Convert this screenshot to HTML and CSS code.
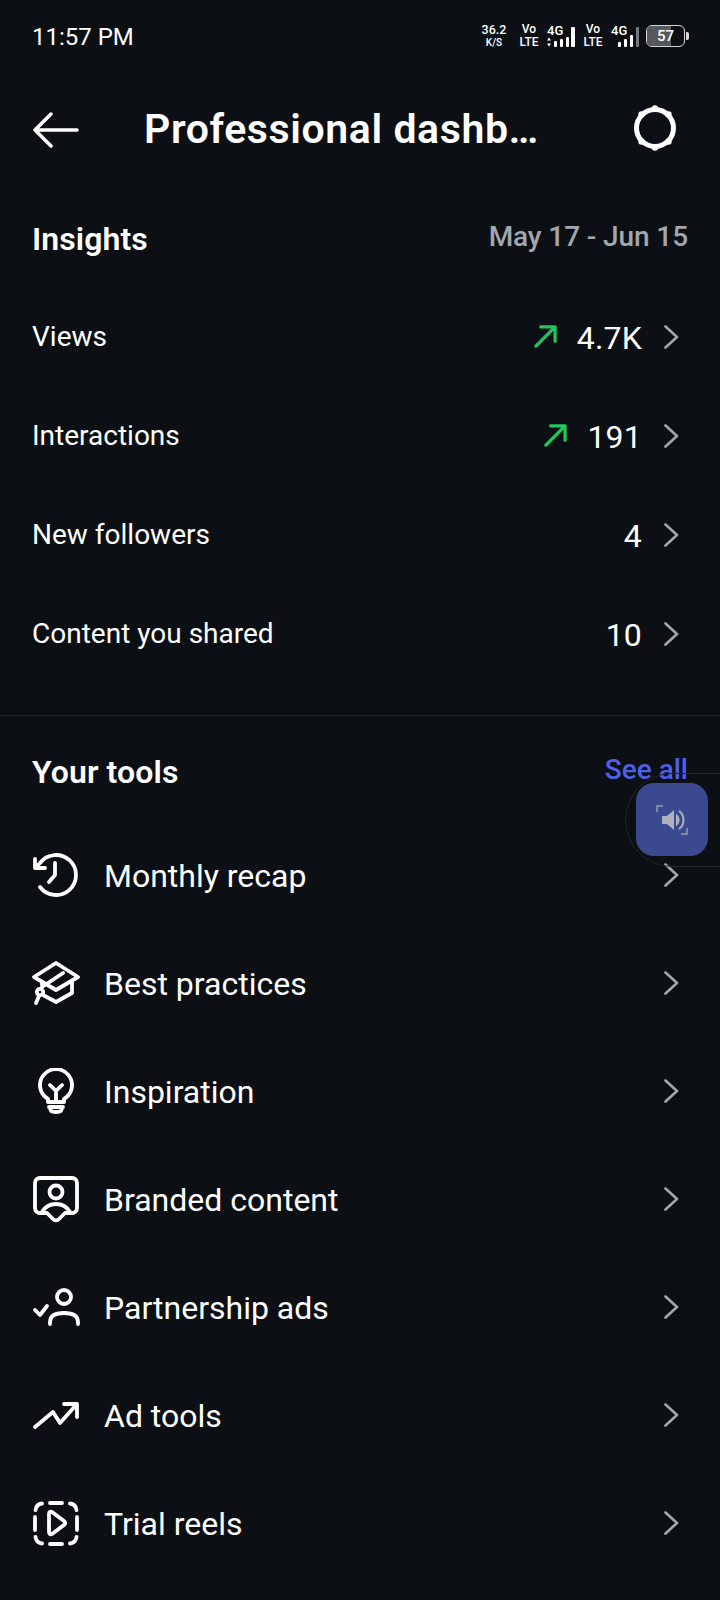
FILE: index.html
```html
<!DOCTYPE html>
<html lang="en">
<head>
<meta charset="utf-8">
<title>Professional dashboard</title>
<link rel="stylesheet" href="styles.css">
</head>
<body>
<div class="screen">
  <div class="status">
    <span class="time">11:57 PM</span>
    <div class="sys">
      <div class="stack speed"><span>36.2</span><span class="small">K/S</span></div>
      <div class="stack volte"><span>Vo</span><span>LTE</span></div>
      <div class="net">
        <span class="g4">4G</span>
        <svg width="28" height="20" viewBox="0 0 28 20"><path d="M2 10.500l2 3H0zM2 19.500l-2-3h4z" fill="#fff"/><rect x="7" y="14" width="3" height="6" rx="1" fill="#fff"/><rect x="13" y="12" width="3" height="8" rx="1" fill="#fff"/><rect x="19" y="10" width="3" height="10" rx="1" fill="#fff"/><rect x="24" y="0" width="4" height="20" rx="1" fill="#fff"/></svg>
      </div>
      <div class="stack volte second"><span>Vo</span><span>LTE</span></div>
      <div class="net">
        <span class="g4">4G</span>
        <svg width="28" height="20" viewBox="0 0 28 20"><rect x="7" y="15" width="3" height="5" rx="1" fill="#fff"/><rect x="13" y="12" width="3" height="8" rx="1" fill="#fff"/><rect x="19" y="8" width="3" height="12" rx="1" fill="#fff"/><rect x="25" y="0" width="3" height="20" rx="1" fill="#77797c"/></svg>
      </div>
      <div class="battery"><div class="level"></div><span class="pct">57</span></div>
      <div class="nub"></div>
    </div>
  </div>

  <header class="topbar">
    <svg class="back" width="48" height="36" viewBox="0 0 48 36"><path d="M45 18H3M19 2L3 18l16 16" fill="none" stroke="#fff" stroke-width="3.500" stroke-linecap="round" stroke-linejoin="round"/></svg>
    <h1 class="title">Professional dashb…</h1>
    <svg class="gear" width="48" height="48" viewBox="0 0 48 48"><circle cx="24" cy="24" r="18.500" fill="none" stroke="#fff" stroke-width="5"/><g fill="#fff"><circle cx="24" cy="4.500" r="3.200"/><circle cx="24" cy="43.500" r="3.200"/><circle cx="37.500" cy="10.500" r="3.200"/><circle cx="10.500" cy="10.500" r="3.200"/><circle cx="37.500" cy="37.500" r="3.200"/><circle cx="10.500" cy="37.500" r="3.200"/></g></svg>
  </header>

  <section class="insights">
    <div class="head">
      <h2 class="heading">Insights</h2>
      <span class="date">May 17 - Jun 15</span>
    </div>
    <div class="stat">
      <span class="stat-label">Views</span>
      <svg class="up" width="23" height="23" viewBox="0 0 24 24"><path d="M2 22L22 2M7 2h15v15" fill="none" stroke="#22c55e" stroke-width="3.400" stroke-linecap="round" stroke-linejoin="round"/></svg>
      <span class="value">4.7K</span>
      <svg class="chev" width="16" height="24" viewBox="0 0 16 24"><path d="M1.500 1.500L13 12 1.500 22.500" /></svg>
    </div>
    <div class="stat">
      <span class="stat-label">Interactions</span>
      <svg class="up" width="23" height="23" viewBox="0 0 24 24"><path d="M2 22L22 2M7 2h15v15" fill="none" stroke="#22c55e" stroke-width="3.400" stroke-linecap="round" stroke-linejoin="round"/></svg>
      <span class="value">191</span>
      <svg class="chev" width="16" height="24" viewBox="0 0 16 24"><path d="M1.500 1.500L13 12 1.500 22.500" /></svg>
    </div>
    <div class="stat">
      <span class="stat-label">New followers</span>
      <span class="value">4</span>
      <svg class="chev" width="16" height="24" viewBox="0 0 16 24"><path d="M1.500 1.500L13 12 1.500 22.500" /></svg>
    </div>
    <div class="stat">
      <span class="stat-label">Content you shared</span>
      <span class="value">10</span>
      <svg class="chev" width="16" height="24" viewBox="0 0 16 24"><path d="M1.500 1.500L13 12 1.500 22.500" /></svg>
    </div>
  </section>

  <section class="tools">
    <div class="head tools-head">
      <h2 class="heading">Your tools</h2>
      <span class="see">See all</span>
    </div>
    <div class="tool">
      <svg class="ico" width="48" height="48" viewBox="0 0 48 48"><path d="M3 7v9h10M3 16l5-5A20 20 0 1 1 8 35M23 11v12l-6 7"/></svg>
      <span class="tool-label">Monthly recap</span>
      <svg class="chev" width="16" height="24" viewBox="0 0 16 24"><path d="M1.500 1.500L13 12 1.500 22.500" /></svg>
    </div>
    <div class="tool">
      <svg class="ico" width="48" height="48" viewBox="0 0 48 48"><path d="M24 3L2 17l22 13 22-13zM40 21v12l-16 9-13-7M10 22v3M31 13L10 27"/><circle cx="8" cy="32" r="3.200"/><path d="M7 36l-3 7"/></svg>
      <span class="tool-label">Best practices</span>
      <svg class="chev" width="16" height="24" viewBox="0 0 16 24"><path d="M1.500 1.500L13 12 1.500 22.500" /></svg>
    </div>
    <div class="tool">
      <svg class="ico" width="48" height="48" viewBox="0 0 48 48"><path d="M16 31a16 16 0 1 1 16 0v3H16zM18 17l6 6 6-6M24 23v11M17 39h14M18 39c0 4 1 5 6 5s6-1 6-5"/></svg>
      <span class="tool-label">Inspiration</span>
      <svg class="chev" width="16" height="24" viewBox="0 0 16 24"><path d="M1.500 1.500L13 12 1.500 22.500" /></svg>
    </div>
    <div class="tool">
      <svg class="ico" width="48" height="48" viewBox="0 0 48 48"><path d="M15 37H8a5 5 0 0 1-5-5V7a5 5 0 0 1 5-5h32a5 5 0 0 1 5 5v25a5 5 0 0 1-5 5h-7l-6 6a4 4 0 0 1-6 0zM10 36c3-5 8-8 14-8s11 3 14 8"/><circle cx="24" cy="16" r="6.500"/></svg>
      <span class="tool-label">Branded content</span>
      <svg class="chev" width="16" height="24" viewBox="0 0 16 24"><path d="M1.500 1.500L13 12 1.500 22.500" /></svg>
    </div>
    <div class="tool">
      <svg class="ico" width="48" height="48" viewBox="0 0 48 48"><circle cx="32" cy="13" r="7"/><path d="M18 40v-2c0-6 5-9 14-9s14 3 14 9v2M3 26l5 5 7-9"/></svg>
      <span class="tool-label">Partnership ads</span>
      <svg class="chev" width="16" height="24" viewBox="0 0 16 24"><path d="M1.500 1.500L13 12 1.500 22.500" /></svg>
    </div>
    <div class="tool">
      <svg class="ico" width="48" height="48" viewBox="0 0 48 48"><path d="M3 35l18-15 7 11 17-19M32 12h13v13"/></svg>
      <span class="tool-label">Ad tools</span>
      <svg class="chev" width="16" height="24" viewBox="0 0 16 24"><path d="M1.500 1.500L13 12 1.500 22.500" /></svg>
    </div>
    <div class="tool">
      <svg class="ico" width="48" height="48" viewBox="0 0 48 48"><path d="M18 3h12M18 44h12M3 17v13M45 17v13M3.500 10C4 6 6 4 10 3.500M38 3.500C42 4 44 6 44.500 10M3.500 37C4 41 6 43 10 43.500M38 43.500C42 43 44 41 44.500 37M17 14c0-2 1.500-3 3-2l12 9c1.500 1 1.500 3 0 4l-12 9c-1.500 1-3 0-3-2z"/></svg>
      <span class="tool-label">Trial reels</span>
      <svg class="chev" width="16" height="24" viewBox="0 0 16 24"><path d="M1.500 1.500L13 12 1.500 22.500" /></svg>
    </div>
  </section>

  <div class="float-pill"></div>
  <div class="float-btn">
    <svg width="32" height="30" viewBox="0 0 32 30"><path d="M1 7V1h6M31 23v6h-6" fill="none" stroke="#7f86a3" stroke-width="2"/><path d="M6 11h5l7-6v20l-7-6H6z" fill="#aeb2bd"/><path d="M20 9c2.500 1.500 3.500 3.500 3.500 6s-1 4.500-3.500 6z" fill="#aeb2bd"/><path d="M23 6c3 2 4.500 5 4.500 9s-1.500 7-4.500 9" fill="none" stroke="#aeb2bd" stroke-width="2"/></svg>
  </div>
</div>
</body>
</html>
```

FILE: styles.css
```css
* { box-sizing: border-box; }
html, body { margin: 0; padding: 0; }
body { background: #0c1014; color: #fff; font-family: Roboto, "Noto Sans", sans-serif; }
.screen { position: relative; width: 720px; height: 1600px; overflow: hidden; background: #0c1014; }

.status { height: 72px; padding: 0 32px; display: flex; align-items: center; justify-content: space-between; }
.time { font-size: 24px; margin-top: 2px; }
.sys { display: flex; align-items: center; margin-right: -1px; }
.stack { display: flex; flex-direction: column; align-items: center; font-size: 12px; font-weight: 500; line-height: 13px; }
.stack .small { font-size: 10px; }
.speed { width: 26px; margin-right: 12px; font-size: 12.500px; }
.volte { width: 20px; margin-right: 8px; }
.volte.second { margin-left: 8px; }
.net { position: relative; display: flex; align-items: flex-end; width: 28px; height: 22px; }
.g4 { position: absolute; left: 0; top: -1px; font-size: 13px; font-weight: 500; line-height: 13px; }
.battery { position: relative; width: 39px; height: 22px; margin-left: 7px; border: 1.500px solid #d5d6d8; border-radius: 6px; overflow: hidden; display: flex; align-items: center; justify-content: center; }
.level { position: absolute; left: 0; top: 0; bottom: 0; width: 65%; background: #55585c; }
.pct { position: relative; font-size: 15px; font-weight: 500; }
.nub { width: 3px; height: 8px; margin-left: 1px; background: #d5d6d8; border-radius: 0 2px 2px 0; }

.topbar { height: 112px; padding: 0 41px 0 32px; display: flex; align-items: center; }
.back { flex: none; margin-top: 4px; }
.title { flex: 1; margin: 2px 0 0 64px; font-size: 41px; font-weight: 600; line-height: 48px; white-space: nowrap; letter-spacing: 0.6px; }
.gear { flex: none; }

.insights { height: 532px; border-bottom: 1px solid #1e2227; }
.head { display: flex; align-items: center; justify-content: space-between; padding: 0 32px; height: 103px; }
.heading { margin: 6px 0 0; font-size: 32px; font-weight: 600; letter-spacing: 0.1px; }
.date { font-size: 28px; font-weight: 500; color: #a3a6ae; margin-top: 2px; letter-spacing: -0.1px; }

.stat { height: 99px; padding: 0 40px 0 32px; display: flex; align-items: center; }
.stat-label { flex: 1; font-size: 28px; margin-top: -1px; }
.up { margin-right: 20px; }
.value { font-size: 32px; margin: 2px 22px 0 0; letter-spacing: 0.2px; }
.chev { flex: none; fill: none; stroke: #a3a5aa; stroke-width: 2.600; stroke-linecap: round; stroke-linejoin: round; }

.tools-head { height: 106px; }
.see { font-size: 28px; font-weight: 500; color: #4f60e6; margin-top: 0; }

.tool { height: 108px; padding: 0 40px 0 32px; display: flex; align-items: center; }
.tool .chev { margin-top: -2px; }
.ico { flex: none; fill: none; stroke: #fff; stroke-width: 3.800; stroke-linecap: round; stroke-linejoin: round; }
.tool-label { flex: 1; margin-left: 24px; font-size: 32px; }

.float-pill { position: absolute; left: 625px; top: 773px; width: 140px; height: 94px; border: 1px solid #22262b; border-radius: 47px; }
.float-btn { position: absolute; left: 636px; top: 783px; width: 72px; height: 73px; border-radius: 18px; background: #3b4a8e; display: flex; align-items: center; justify-content: center; }
```
